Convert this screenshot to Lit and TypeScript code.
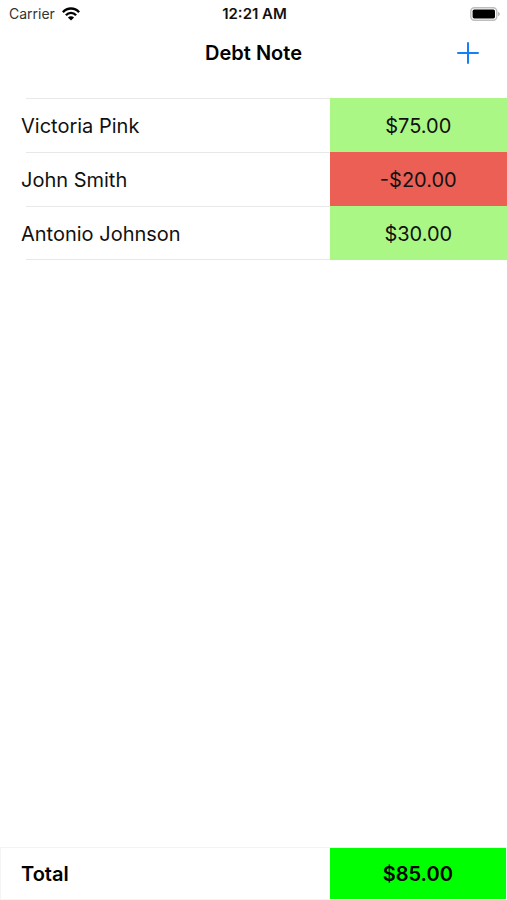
import { LitElement, html, css } from "lit";
import { customElement, state } from "lit/decorators.js";
import { classMap } from "lit/directives/class-map.js";

interface Debt {
  name: string;
  amount: number;
}

const money = (value: number) =>
  `${value < 0 ? "-" : ""}$${Math.abs(value).toFixed(2)}`;

@customElement("status-bar")
class StatusBar extends LitElement {
  static styles = css`
    :host {
      display: grid;
      grid-template-columns: 1fr auto 1fr;
      align-items: center;
      height: 28px;
      padding: 0 7px 0 9px;
      font-size: 14px;
      line-height: 20px;
      color: #111;
    }
    .carrier {
      display: flex;
      align-items: center;
      gap: 7px;
      color: #333;
    }
    .time {
      font-size: 15px;
      font-weight: 600;
    }
    .battery {
      justify-self: end;
    }
    svg {
      display: block;
    }
  `;

  render() {
    return html`
      <span class="carrier">
        Carrier
        <svg width="18" height="14" viewBox="0 0 18 14" aria-hidden="true">
          <g fill="none" stroke="#000" stroke-width="2.4">
            <path d="M0.9 5.2C5.4 0.3 12.6 0.3 17.1 5.2" />
            <path d="M3.9 8.2C6.8 5.1 11.2 5.1 14.1 8.2" />
          </g>
          <path d="M9 13.6L5.9 10.5C7.6 8.9 10.4 8.9 12.1 10.5Z" />
        </svg>
      </span>
      <span class="time">12:21 AM</span>
      <svg class="battery" width="30" height="14" viewBox="0 0 30 14" role="img" aria-label="Battery full">
        <rect x="0.8" y="0.8" width="26" height="12.4" rx="3.6" fill="#fff" stroke="#bdbdbd" stroke-width="1.4" />
        <rect x="2.6" y="2.6" width="22.4" height="8.8" rx="1.6" />
        <path d="M28.2 4.8C30.2 5.6 30.2 8.4 28.2 9.2Z" fill="#aaa" />
      </svg>
    `;
  }
}

@customElement("app-root")
class AppRoot extends LitElement {
  static styles = css`
    :host {
      display: flex;
      flex-direction: column;
      min-height: 100vh;
      box-sizing: border-box;
      background: #fff;
      color: #111;
      font-family: Inter, "Liberation Sans", sans-serif;
      font-size: 20px;
      line-height: 24px;
    }
    header {
      display: grid;
      grid-template-columns: 1fr auto 1fr;
      align-items: center;
      height: 50px;
      padding: 0 24px;
    }
    h1 {
      grid-column: 2;
      margin: 0;
      font-size: 20px;
      font-weight: 600;
      color: #000;
    }
    .add {
      justify-self: end;
      padding: 4px;
      border: 0;
      background: none;
      cursor: pointer;
    }
    .add svg {
      display: block;
    }
    main {
      flex: 1;
      padding-top: 20px;
    }
    table {
      width: 100%;
      table-layout: fixed;
      border-collapse: collapse;
    }
    th,
    td {
      box-sizing: border-box;
      height: 54px;
      padding: 2px 0 0;
      font-weight: 400;
    }
    .name {
      width: 65%;
      padding-left: 21px;
      text-align: left;
      background: linear-gradient(#e8e8e8, #e8e8e8) 26px 0 / 100% 1px no-repeat;
    }
    tr:last-child .name {
      background:
        linear-gradient(#e8e8e8, #e8e8e8) 26px 0 / 100% 1px no-repeat,
        linear-gradient(#e8e8e8, #e8e8e8) 26px 100% / 100% 1px no-repeat;
    }
    .amount {
      text-align: center;
      background: #abf786;
    }
    .amount.owed {
      background: #ec5f54;
    }
    footer {
      display: flex;
      height: 53px;
      font-weight: 600;
      color: #000;
    }
    .label,
    .sum {
      display: flex;
      align-items: center;
      box-sizing: border-box;
      border: 1px solid #f4f4f4;
    }
    .label {
      width: 65%;
      padding-left: 20px;
      border-right: 0;
    }
    .sum {
      flex: 1;
      justify-content: center;
      border-left: 0;
      background: #00ff00;
      background-clip: padding-box;
    }
  `;

  @state() private debts: Debt[] = [
    { name: "Victoria Pink", amount: 75 },
    { name: "John Smith", amount: -20 },
    { name: "Antonio Johnson", amount: 30 },
  ];

  render() {
    const total = this.debts.reduce((sum, debt) => sum + debt.amount, 0);
    return html`
      <status-bar></status-bar>
      <header>
        <h1>Debt Note</h1>
        <button class="add" aria-label="Add debt">
          <svg width="22" height="22" viewBox="0 0 22 22" aria-hidden="true">
            <path d="M11 1V21M1 11H21" fill="none" stroke="#1580f5" stroke-width="2" stroke-linecap="round" />
          </svg>
        </button>
      </header>
      <main>
        <table>
          <tbody>
            ${this.debts.map(
              (debt) => html`
                <tr>
                  <th class="name" scope="row">${debt.name}</th>
                  <td class=${classMap({ amount: true, owed: debt.amount < 0 })}>
                    ${money(debt.amount)}
                  </td>
                </tr>
              `
            )}
          </tbody>
        </table>
      </main>
      <footer>
        <span class="label">Total</span>
        <span class="sum">${money(total)}</span>
      </footer>
    `;
  }
}
